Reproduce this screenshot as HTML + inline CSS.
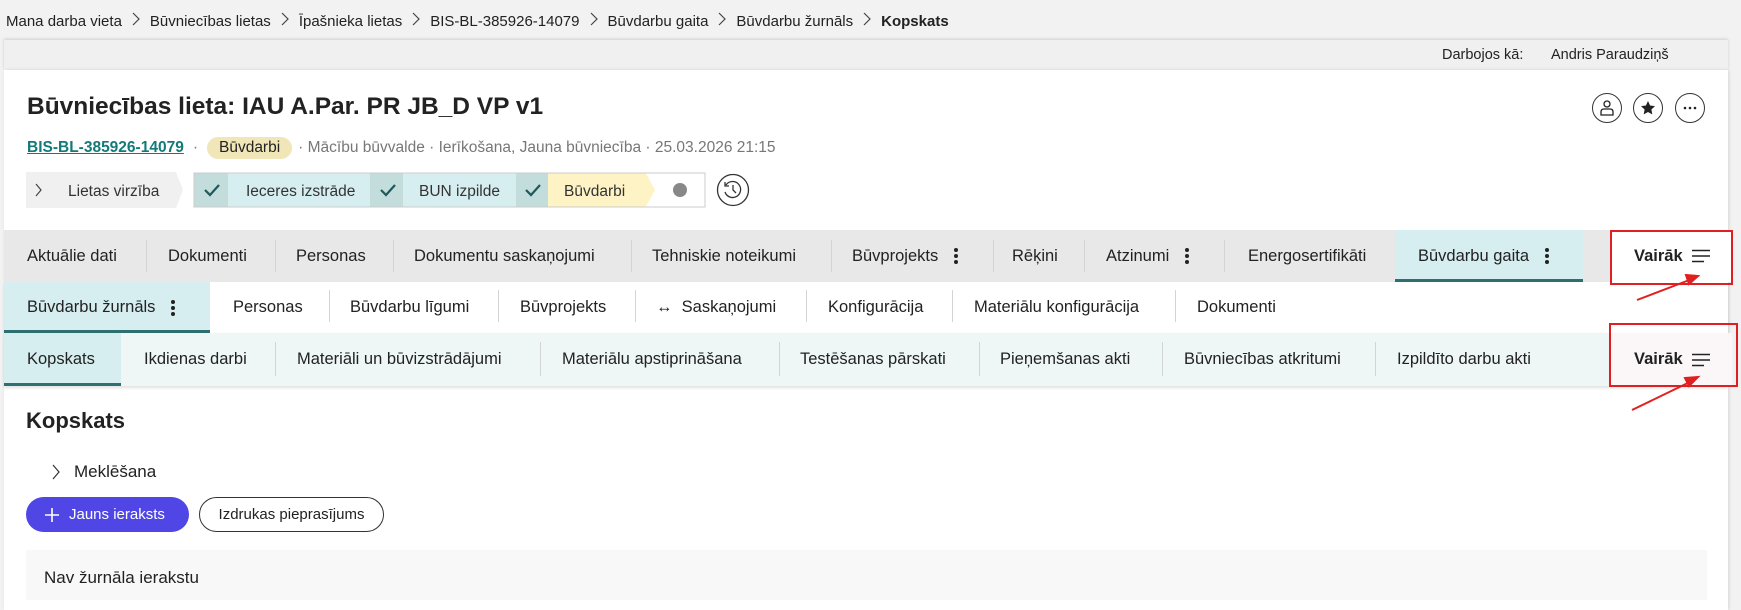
<!DOCTYPE html>
<html><head><meta charset="utf-8"><style>
*{box-sizing:border-box;margin:0;padding:0}
body{width:1741px;height:596px;overflow:hidden;background:#f2f2f2;font-family:"Liberation Sans",sans-serif;color:#222;position:relative}
.abs{position:absolute}
.bc{left:6px;top:12px;font-size:15px;color:#222;white-space:nowrap;display:flex;align-items:center}
.bc .s{display:inline-block;width:28px;text-align:center}
.topbar{left:4px;top:40px;width:1724px;height:30px;background:#f0f0f0;box-shadow:0 -1px 3px rgba(0,0,0,.15)}
.card{left:4px;top:70px;width:1724px;height:540px;background:#fff;box-shadow:1px 0 3px rgba(0,0,0,.12)}
.tabs{position:absolute;left:4px;width:1724px;display:flex;align-items:center;font-size:16.5px;white-space:nowrap}
.tabs div{position:absolute;top:0;height:100%;display:flex;align-items:center}
.sep{position:absolute;width:1px;background:#d4d4d4}
.dots{display:inline-block;width:4px;margin-left:16px;vertical-align:middle}
.dots i{display:block;width:4px;height:4px;border-radius:2px;background:#222;margin:2px 0}
.circ{position:absolute;width:30px;height:30px;border:1.3px solid #333;border-radius:50%;display:flex;align-items:center;justify-content:center}
.ham{margin-left:8px}
</style></head><body>
<div class="abs bc">Mana darba vieta<span class="s"><svg width="8" height="14"><path d="M1 1l6 6-6 6" fill="none" stroke="#444" stroke-width="1.2"/></svg></span>Būvniecības lietas<span class="s"><svg width="8" height="14"><path d="M1 1l6 6-6 6" fill="none" stroke="#444" stroke-width="1.2"/></svg></span>Īpašnieka lietas<span class="s"><svg width="8" height="14"><path d="M1 1l6 6-6 6" fill="none" stroke="#444" stroke-width="1.2"/></svg></span>BIS-BL-385926-14079<span class="s"><svg width="8" height="14"><path d="M1 1l6 6-6 6" fill="none" stroke="#444" stroke-width="1.2"/></svg></span>Būvdarbu gaita<span class="s"><svg width="8" height="14"><path d="M1 1l6 6-6 6" fill="none" stroke="#444" stroke-width="1.2"/></svg></span>Būvdarbu žurnāls<span class="s"><svg width="8" height="14"><path d="M1 1l6 6-6 6" fill="none" stroke="#444" stroke-width="1.2"/></svg></span><b>Kopskats</b></div>
<div class="abs topbar"></div>
<div class="abs" style="left:1442px;top:47px;font-size:14.5px">Darbojos kā:</div>
<div class="abs" style="left:1551px;top:47px;font-size:14.5px">Andris Paraudziņš</div>
<div class="abs card"></div>
<div class="abs" style="left:27px;top:93px;font-size:24.5px;font-weight:bold;color:#222">Būvniecības lieta: IAU A.Par. PR JB_D VP v1</div>
<div class="circ" style="left:1592px;top:93px"><svg width="16" height="18" viewBox="0 0 16 18"><circle cx="8" cy="5" r="3" fill="none" stroke="#222" stroke-width="1.3"/><path d="M2 16v-3q0-3 3-3h6q3 0 3 3v3z" fill="none" stroke="#222" stroke-width="1.3"/></svg></div>
<div class="circ" style="left:1633px;top:93px"><svg width="16" height="16" viewBox="0 0 16 16"><path d="M8 1l2.1 4.5 4.9.6-3.6 3.4.9 4.9L8 12l-4.3 2.4.9-4.9L1 6.1l4.9-.6z" fill="#222"/></svg></div>
<div class="circ" style="left:1675px;top:93px"><svg width="14" height="4"><circle cx="2" cy="2" r="1.3" fill="#222"/><circle cx="7" cy="2" r="1.3" fill="#222"/><circle cx="12" cy="2" r="1.3" fill="#222"/></svg></div>
<div class="abs" style="left:27px;top:137px;font-size:15.5px;white-space:nowrap;color:#777;display:flex;align-items:center">
<b style="color:#137a7a;text-decoration:underline">BIS-BL-385926-14079</b><span style="margin:0 9px">·</span>
<span style="background:#f1e6b8;color:#222;border-radius:12px;padding:2px 12px">Būvdarbi</span><span style="margin-left:6px">· Mācību būvvalde · Ierīkošana, Jauna būvniecība · 25.03.2026 21:15</span></div>
<svg class="abs" style="left:26px;top:172px" width="730" height="38" viewBox="0 0 730 38">
<polygon points="0,0 150,0 157,18 150,36 0,36" fill="#f0f0f0"/>
<path d="M10 12l5 6-5 6" fill="none" stroke="#444" stroke-width="1.2"/>
<text x="42" y="24" font-size="15.5" fill="#333" font-family="Liberation Sans">Lietas virzība</text>
<rect x="168" y="1" width="511" height="34" fill="#fff" stroke="#ccc"/>
<rect x="168.5" y="1.5" width="34" height="33" fill="#c3dcdc"/>
<rect x="202" y="1.5" width="142" height="33" fill="#d6eef0"/>
<rect x="344" y="1.5" width="33" height="33" fill="#c3dcdc"/>
<rect x="377" y="1.5" width="113" height="33" fill="#d6eef0"/>
<rect x="490" y="1.5" width="32" height="33" fill="#c3dcdc"/>
<polygon points="522,1.5 620,1.5 629,18 620,34.5 522,34.5" fill="#fdf3c4"/>
<g fill="none" stroke="#1e5a5a" stroke-width="2.2"><path d="M179 18l5 5 9-10"/><path d="M355 18l5 5 9-10"/><path d="M500 18l5 5 9-10"/></g>
<text x="220" y="24" font-size="15.5" fill="#333" font-family="Liberation Sans">Ieceres izstrāde</text>
<text x="393" y="24" font-size="15.5" fill="#333" font-family="Liberation Sans">BUN izpilde</text>
<text x="538" y="24" font-size="15.5" fill="#333" font-family="Liberation Sans">Būvdarbi</text>
<circle cx="654" cy="18" r="7" fill="#888"/>
<circle cx="707" cy="18" r="15.5" fill="#fff" stroke="#333" stroke-width="1.3"/>
<path d="M700 13a8 8 0 1 1 -1 7M699 10v4h4M707 13v5l3 3" fill="none" stroke="#333" stroke-width="1.3"/>
</svg>
<div class="tabs" style="top:230px;height:52px;background:#e8e8e8">
<div style="left:23px">Aktuālie dati</div><span class="sep" style="left:142px;top:10px;height:32px"></span>
<div style="left:164px">Dokumenti</div><span class="sep" style="left:271px;top:10px;height:32px"></span>
<div style="left:292px">Personas</div><span class="sep" style="left:389px;top:10px;height:32px"></span>
<div style="left:410px">Dokumentu saskaņojumi</div><span class="sep" style="left:627px;top:10px;height:32px"></span>
<div style="left:648px">Tehniskie noteikumi</div><span class="sep" style="left:827px;top:10px;height:32px"></span>
<div style="left:848px">Būvprojekts<span class="dots"><i></i><i></i><i></i></span></div><span class="sep" style="left:989px;top:10px;height:32px"></span>
<div style="left:1008px">Rēķini</div><span class="sep" style="left:1080px;top:10px;height:32px"></span>
<div style="left:1102px">Atzinumi<span class="dots"><i></i><i></i><i></i></span></div><span class="sep" style="left:1220px;top:10px;height:32px"></span>
<div style="left:1244px">Energosertifikāti</div>
<div style="left:1391px;width:188px;background:#d6eef0;border-bottom:3px solid #2f6f6f;padding-left:23px;padding-top:3px">Būvdarbu gaita<span class="dots"><i></i><i></i><i></i></span></div>
<div style="left:1607px;width:121px;background:#fff;font-weight:bold;padding-left:23px">Vairāk<svg class="ham" width="20" height="14"><path d="M1 1.5h18M1 7h18M1 12.5h12" stroke="#222" stroke-width="1.4"/></svg></div>
</div>
<div class="tabs" style="top:282px;height:51px;background:#fff;box-shadow:0 2px 3px rgba(0,0,0,.08)">
<div style="left:0;width:206px;background:#d6eef0;border-bottom:3px solid #2f6f6f;padding-left:23px;padding-top:3px">Būvdarbu žurnāls<span class="dots"><i></i><i></i><i></i></span></div>
<div style="left:229px">Personas</div><span class="sep" style="left:325px;top:8px;height:32px"></span>
<div style="left:346px">Būvdarbu līgumi</div><span class="sep" style="left:494px;top:8px;height:32px"></span>
<div style="left:516px">Būvprojekts</div><span class="sep" style="left:631px;top:8px;height:32px"></span>
<div style="left:652px">↔&nbsp; Saskaņojumi</div><span class="sep" style="left:802px;top:8px;height:32px"></span>
<div style="left:824px">Konfigurācija</div><span class="sep" style="left:948px;top:8px;height:32px"></span>
<div style="left:970px">Materiālu konfigurācija</div><span class="sep" style="left:1171px;top:8px;height:32px"></span>
<div style="left:1193px">Dokumenti</div>
</div>
<div class="tabs" style="top:333px;height:53px;background:#eef6f6;box-shadow:0 2px 3px rgba(0,0,0,.12)">
<div style="left:0;width:117px;background:#d6eef0;border-bottom:3px solid #2f6f6f;padding-left:23px;padding-top:3px">Kopskats</div>
<div style="left:140px">Ikdienas darbi</div><span class="sep" style="left:271px;top:9px;height:34px"></span>
<div style="left:293px">Materiāli un būvizstrādājumi</div><span class="sep" style="left:536px;top:9px;height:34px"></span>
<div style="left:558px">Materiālu apstiprināšana</div><span class="sep" style="left:775px;top:9px;height:34px"></span>
<div style="left:796px">Testēšanas pārskati</div><span class="sep" style="left:975px;top:9px;height:34px"></span>
<div style="left:996px">Pieņemšanas akti</div><span class="sep" style="left:1158px;top:9px;height:34px"></span>
<div style="left:1180px">Būvniecības atkritumi</div><span class="sep" style="left:1371px;top:9px;height:34px"></span>
<div style="left:1393px">Izpildīto darbu akti</div>
<div style="left:1606px;width:122px;background:#fbf7f8;font-weight:bold;padding-left:24px">Vairāk<svg class="ham" width="20" height="14"><path d="M1 1.5h18M1 7h18M1 12.5h12" stroke="#222" stroke-width="1.4"/></svg></div>
</div>
<div class="abs" style="left:1610px;top:230px;width:123px;height:55px;border:2px solid #e02020"></div>
<div class="abs" style="left:1609px;top:323px;width:129px;height:64px;border:2px solid #e02020"></div>
<svg class="abs" style="left:0;top:0" width="1741" height="596"><g stroke="#e02020" stroke-width="2" fill="#e02020">
<line x1="1637" y1="300" x2="1692" y2="279"/><polygon points="1698,276 1686,275 1689,284"/>
<line x1="1632" y1="410" x2="1692" y2="381"/><polygon points="1698,377 1685,378 1689,386"/></g></svg>
<div class="abs" style="left:26px;top:408px;font-size:22px;font-weight:bold">Kopskats</div>
<div class="abs" style="left:52px;top:462px;font-size:17px;display:flex;align-items:center"><svg width="8" height="16" style="margin-right:14px"><path d="M1 1l6 7-6 7" fill="none" stroke="#333" stroke-width="1.2"/></svg>Meklēšana</div>
<div class="abs" style="left:26px;top:497px;width:163px;height:35px;border-radius:18px;background:#4f46e5;color:#fff;font-size:15px;display:flex;align-items:center;padding-left:18px"><svg width="16" height="16" style="margin-right:9px"><path d="M8 1v14M1 8h14" stroke="#fff" stroke-width="1.6"/></svg>Jauns ieraksts</div>
<div class="abs" style="left:199px;top:497px;width:185px;height:35px;border-radius:18px;border:1.3px solid #333;font-size:15px;display:flex;align-items:center;justify-content:center">Izdrukas pieprasījums</div>
<div class="abs" style="left:26px;top:550px;width:1681px;height:50px;background:#f8f8f8"></div>
<div class="abs" style="left:44px;top:568px;font-size:17px">Nav žurnāla ierakstu</div>
</body></html>
